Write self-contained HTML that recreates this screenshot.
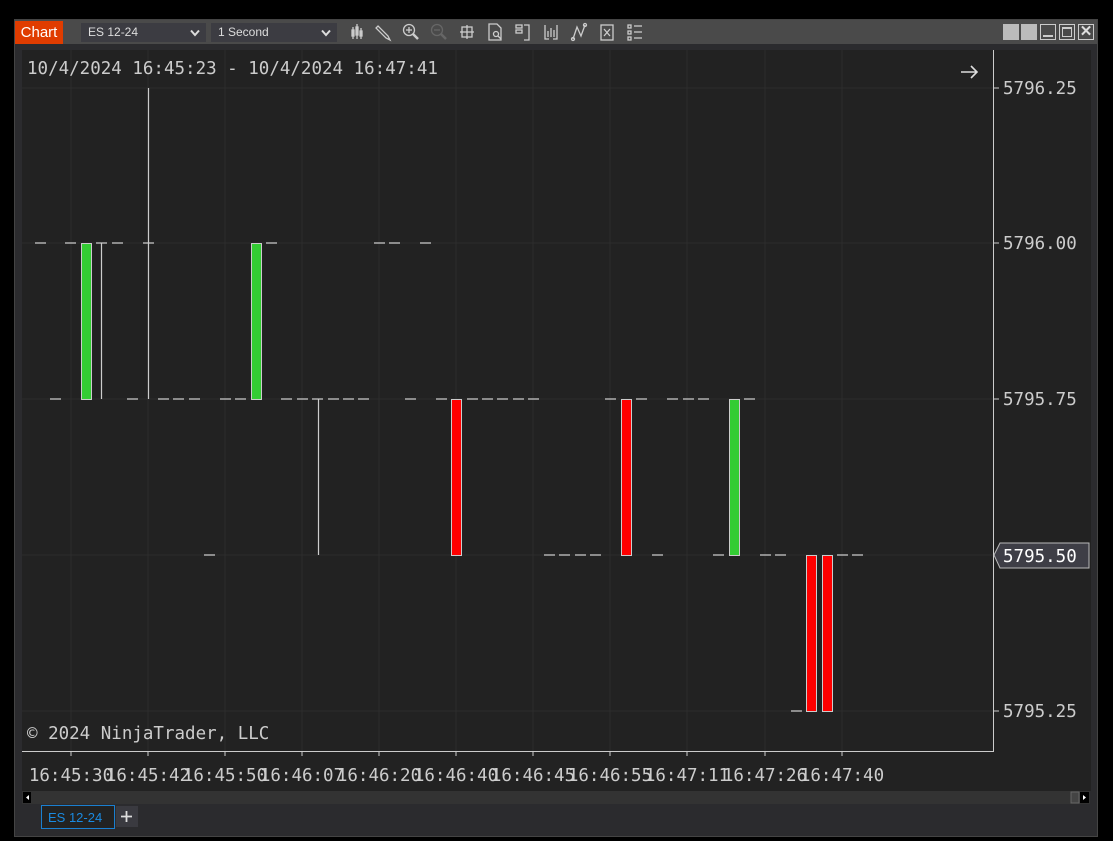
<!DOCTYPE html>
<html><head><meta charset="utf-8"><style>
*{margin:0;padding:0;box-sizing:border-box}
body{width:1113px;height:841px;background:#000;position:relative;overflow:hidden;font-family:"Liberation Sans",sans-serif}
.win{position:absolute;left:14px;top:19px;width:1084px;height:818px;background:#2b2b2e;border:1px solid #444}
.title{position:absolute;left:0;top:0;width:1082px;height:24px;background:#4a4a4a}
.chartbtn{position:absolute;left:0;top:1px;width:48px;height:23px;background:#e03c00;color:#fff;font-size:15px;line-height:23px;text-align:center}
.dd{position:absolute;top:3px;height:19px;background:#3c3c42;color:#ddd;font-size:12px;line-height:19px;padding-left:7px}
.dd svg{position:absolute;right:6px;top:6px}
.wb{position:absolute;top:4px;width:16px;height:16px}
svg text{font-family:"DejaVu Sans Mono",monospace}
</style></head><body>
<div class="win">
<div class="title">
<div class="chartbtn">Chart</div>
<div class="dd" style="left:66px;width:125px">ES 12-24<svg width="10" height="8"><path d="M1 1.5 L5 6 L9 1.5" stroke="#ddd" stroke-width="2" fill="none"/></svg></div>
<div class="dd" style="left:196px;width:126px">1 Second<svg width="10" height="8"><path d="M1 1.5 L5 6 L9 1.5" stroke="#ddd" stroke-width="2" fill="none"/></svg></div>
<svg style="position:absolute;left:330px;top:2px" width="330" height="20" stroke="#ccc" fill="none" stroke-width="1.3">
<g><line x1="8" y1="5" x2="8" y2="17"/><line x1="12" y1="2" x2="12" y2="17"/><line x1="16" y1="6" x2="16" y2="17"/><rect x="7" y="8" width="2" height="6" fill="#ccc"/><rect x="11" y="5" width="2" height="8" fill="#ccc"/><rect x="15" y="9" width="2" height="5" fill="#ccc"/></g>
<g transform="translate(28,0)"><path d="M5 4 L15 14 L17 18 L13 16 L3 6 Z"/></g>
<g transform="translate(56,0)"><circle cx="8" cy="8" r="5.5"/><line x1="12" y1="12" x2="17" y2="17" stroke-width="2.5"/><line x1="5" y1="8" x2="11" y2="8"/><line x1="8" y1="5" x2="8" y2="11"/></g>
<g transform="translate(84,0)" stroke="#666"><circle cx="8" cy="8" r="5.5"/><line x1="12" y1="12" x2="17" y2="17" stroke-width="2.5"/><line x1="5" y1="8" x2="11" y2="8"/></g>
<g transform="translate(112,0)"><line x1="3" y1="10" x2="17" y2="10"/><line x1="10" y1="3" x2="10" y2="17"/><rect x="5" y="5" width="10" height="10"/></g>
<g transform="translate(140,0)"><path d="M4 2 H12 L16 6 V18 H4 Z"/><circle cx="11" cy="12" r="2.5"/><line x1="13" y1="14" x2="16" y2="17"/></g>
<g transform="translate(168,0)"><rect x="3" y="3" width="6" height="3"/><rect x="3" y="8" width="6" height="3"/><path d="M11 3 H16 V18 H11"/></g>
<g transform="translate(196,0)"><path d="M4 3 V17 H8 M16 3 V17 H12"/><line x1="7" y1="9" x2="7" y2="15"/><line x1="10" y1="6" x2="10" y2="15"/><line x1="13" y1="8" x2="13" y2="15"/></g>
<g transform="translate(224,0)"><path d="M4 17 L8 5 L12 14 L16 3"/><circle cx="4" cy="17" r="1.5"/><circle cx="16" cy="3" r="1.5"/></g>
<g transform="translate(252,0)"><rect x="4" y="3" width="12" height="15"/><path d="M7 7 L13 14 M7 14 L13 7"/></g>
<g transform="translate(280,0)"><rect x="3" y="3" width="3" height="3"/><rect x="3" y="9" width="3" height="3"/><rect x="3" y="15" width="3" height="3"/><line x1="9" y1="4" x2="17" y2="4"/><line x1="9" y1="10" x2="17" y2="10"/><line x1="9" y1="16" x2="17" y2="16"/></g>
</svg>
<div class="wb" style="left:988px;background:#bbb"></div>
<div class="wb" style="left:1006px;background:#bbb"></div>
<div class="wb" style="left:1025px;border:1px solid #ccc"><div style="position:absolute;left:2px;top:10px;width:10px;height:2px;background:#ccc"></div></div>
<div class="wb" style="left:1044px;border:1px solid #ccc"><div style="position:absolute;left:2px;top:2px;width:10px;height:10px;border:1px solid #ccc;border-top-width:2px"></div></div>
<div class="wb" style="left:1063px;border:1px solid #ccc;color:#ddd;font-size:15px;line-height:14px;text-align:center;font-weight:bold">&#10005;</div>
</div>
</div>
<svg style="position:absolute;left:0;top:0" width="1113" height="841">
<rect x="22" y="50" width="1069" height="741" fill="#222"/>
<rect x="22" y="791" width="1068" height="13" fill="#333"/>
<rect x="23" y="792" width="8" height="11" fill="#000"/><path d="M29 795 L26 797.5 L29 800Z" fill="#fff"/>
<rect x="1071" y="792" width="8" height="11" fill="#444" stroke="#666"/>
<rect x="1080" y="792" width="9" height="11" fill="#000"/><path d="M1083 795 L1086 797.5 L1083 800Z" fill="#fff"/>
<g stroke="#2c2c2c" stroke-width="1">
<line x1="22" y1="88" x2="993" y2="88"/><line x1="22" y1="243" x2="993" y2="243"/><line x1="22" y1="399" x2="993" y2="399"/><line x1="22" y1="555" x2="993" y2="555"/><line x1="22" y1="711" x2="993" y2="711"/>
<line x1="71" y1="50" x2="71" y2="751"/><line x1="148" y1="50" x2="148" y2="751"/><line x1="225" y1="50" x2="225" y2="751"/><line x1="302" y1="50" x2="302" y2="751"/><line x1="379" y1="50" x2="379" y2="751"/><line x1="456" y1="50" x2="456" y2="751"/><line x1="533" y1="50" x2="533" y2="751"/><line x1="610" y1="50" x2="610" y2="751"/><line x1="687" y1="50" x2="687" y2="751"/><line x1="765" y1="50" x2="765" y2="751"/><line x1="842" y1="50" x2="842" y2="751"/>
</g>
<g stroke="#ccc" stroke-width="1">
<line x1="993.5" y1="50" x2="993.5" y2="751"/><line x1="22" y1="751.5" x2="994" y2="751.5"/>
<line x1="994" y1="88" x2="999" y2="88"/><line x1="994" y1="243" x2="999" y2="243"/><line x1="994" y1="399" x2="999" y2="399"/><line x1="994" y1="711" x2="999" y2="711"/>
<line x1="71" y1="751" x2="71" y2="756"/><line x1="148" y1="751" x2="148" y2="756"/><line x1="225" y1="751" x2="225" y2="756"/><line x1="302" y1="751" x2="302" y2="756"/><line x1="379" y1="751" x2="379" y2="756"/><line x1="456" y1="751" x2="456" y2="756"/><line x1="533" y1="751" x2="533" y2="756"/><line x1="610" y1="751" x2="610" y2="756"/><line x1="687" y1="751" x2="687" y2="756"/><line x1="765" y1="751" x2="765" y2="756"/><line x1="842" y1="751" x2="842" y2="756"/>
</g>
<g stroke="#ccc" stroke-width="1.2">
<path d="M35 243h11M50 399h11M65 243h11M96 243h11M112 243h11M127 399h11M143 243h11M158 399h11M173 399h11M189 399h11M204 555h11M220 399h11M235 399h11M266 243h11M281 399h11M297 399h11M312 399h11M328 399h11M343 399h11M358 399h11M374 243h11M389 243h11M405 399h11M420 243h11M436 399h11M467 399h11M482 399h11M497 399h11M513 399h11M528 399h11M544 555h11M559 555h11M575 555h11M590 555h11M605 399h11M636 399h11M652 555h11M667 399h11M683 399h11M698 399h11M713 555h11M744 399h11M760 555h11M775 555h11M791 711h11M837 555h11M852 555h11"/>
<path d="M101.5 243V399M148.5 88V399M318.5 399V555"/>
</g>
<g stroke="#ccc" stroke-width="1">
<rect x="81.5" y="243.5" width="10" height="156" fill="#33cc33"/>
<rect x="251.5" y="243.5" width="10" height="156" fill="#33cc33"/>
<rect x="451.5" y="399.5" width="10" height="156" fill="#f00"/>
<rect x="621.5" y="399.5" width="10" height="156" fill="#f00"/>
<rect x="729.5" y="399.5" width="10" height="156" fill="#33cc33"/>
<rect x="806.5" y="555.5" width="10" height="156" fill="#f00"/>
<rect x="822.5" y="555.5" width="10" height="156" fill="#f00"/>
</g>
<path d="M994 555 L1000 543 H1089 V568 H1000 Z" fill="#3e3e46" stroke="#bbb"/>
<g fill="#ccc" font-size="17.5">
<text x="27" y="74">10/4/2024 16:45:23 - 10/4/2024 16:47:41</text>
<text x="27" y="739">© 2024 NinjaTrader, LLC</text>
<text x="1003" y="94">5796.25</text><text x="1003" y="249">5796.00</text><text x="1003" y="405">5795.75</text><text x="1003" y="717">5795.25</text>
<text x="1003" y="562" fill="#fff">5795.50</text>
<g text-anchor="middle"><text x="71" y="781">16:45:30</text><text x="148" y="781">16:45:42</text><text x="225" y="781">16:45:50</text><text x="302" y="781">16:46:07</text><text x="379" y="781">16:46:20</text><text x="456" y="781">16:46:40</text><text x="533" y="781">16:46:45</text><text x="610" y="781">16:46:55</text><text x="687" y="781">16:47:11</text><text x="765" y="781">16:47:26</text><text x="842" y="781">16:47:40</text></g>
</g>
<path d="M961 72h16M971 66l6 6-6 6" stroke="#ddd" stroke-width="1.6" fill="none"/>
<rect x="41.5" y="805.5" width="73" height="23" fill="#222" stroke="#1a7fd0"/>
<text x="48" y="822" fill="#1a8ae0" font-size="13" style="font-family:'Liberation Sans',sans-serif">ES 12-24</text>
<rect x="116" y="806" width="22" height="21" fill="#3a3a40"/>
<path d="M121 816.5h11M126.5 811v11" stroke="#ddd" stroke-width="1.8"/>
</svg>
</body></html>
